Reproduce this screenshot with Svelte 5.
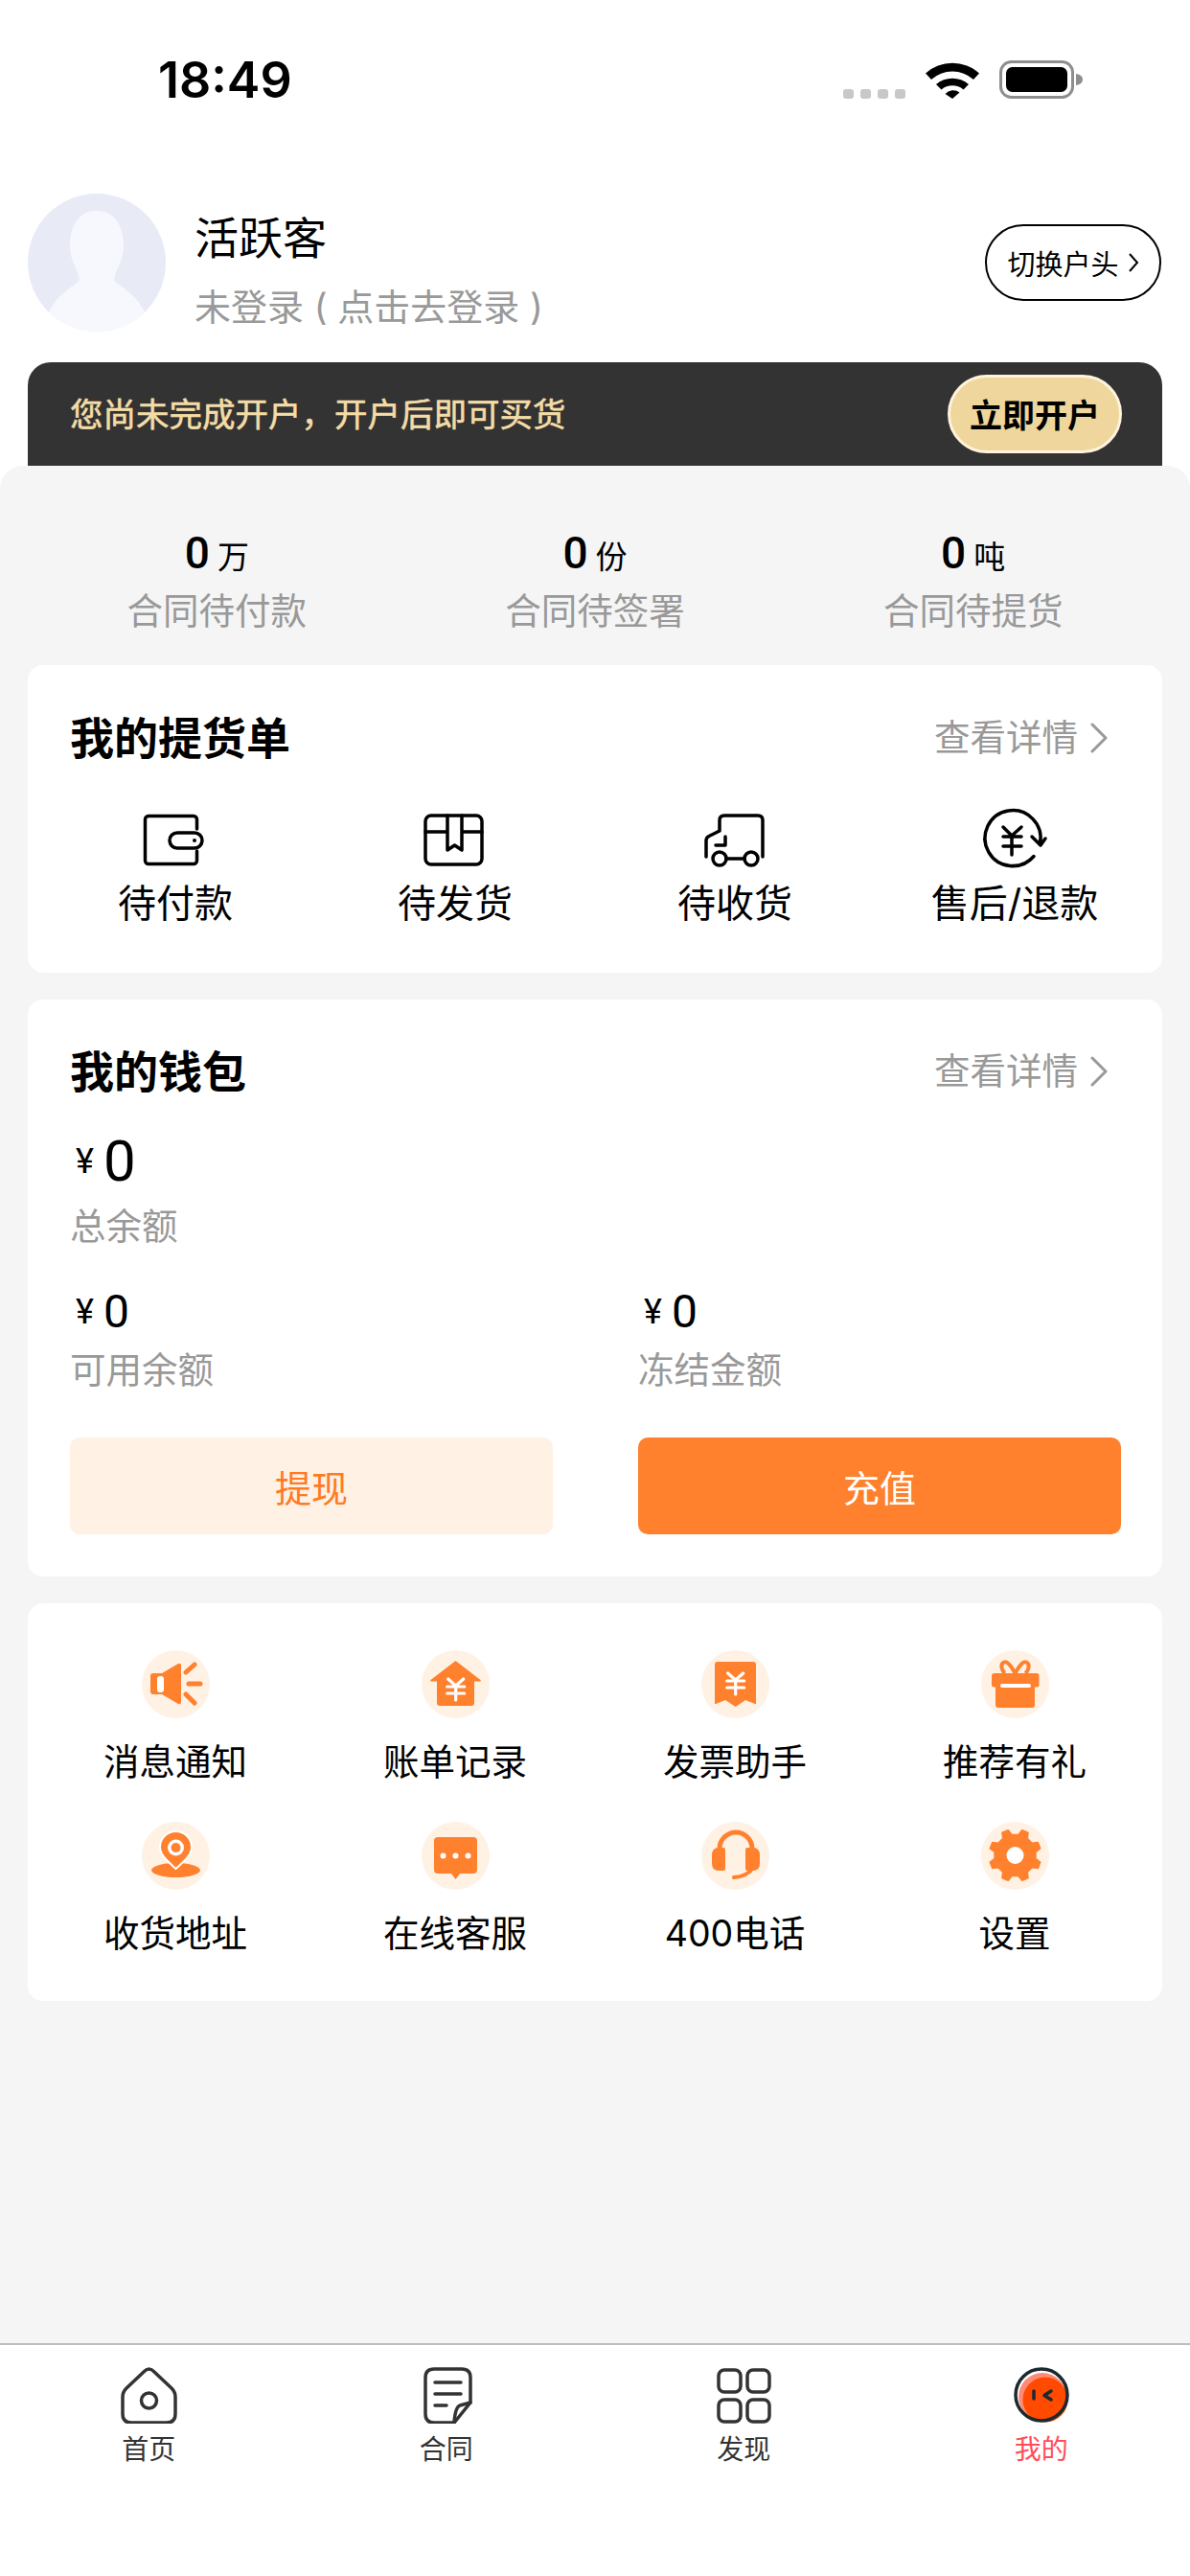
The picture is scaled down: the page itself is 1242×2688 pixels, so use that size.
<script>
	const orange = '#ff812e';

	// 8 teeth gear, teeth sit at 22.5deg so there is a notch straight up
	function gear_path(cx, cy, outer, inner) {
		let points = [];
		for (let i = 0; i < 8; i++) {
			const mid = ((i * 45 + 22.5 - 90) * Math.PI) / 180;
			const spread = [-13, -7, 7, 13];
			const radius = [inner, outer, outer, inner];
			spread.forEach((deg, k) => {
				const a = mid + (deg * Math.PI) / 180;
				points.push(`${(cx + radius[k] * Math.cos(a)).toFixed(1)} ${(cy + radius[k] * Math.sin(a)).toFixed(1)}`);
			});
		}
		return 'M' + points.join('L') + 'Z';
	}

	const stats = [
		{ value: '0', unit: '万', label: '合同待付款' },
		{ value: '0', unit: '份', label: '合同待签署' },
		{ value: '0', unit: '吨', label: '合同待提货' }
	];

	const order_items = [
		{
			label: '待付款',
			icon: `<path d="M59.5 25V15a3.5 3.5 0 0 0-3.5-3.5H9A3.5 3.5 0 0 0 5.500 15v43A3.500 3.500 0 0 0 9 61.500h47a3.500 3.500 0 0 0 3.500-3.500V48"/><rect x="31" y="29" width="34" height="16" rx="8"/><circle cx="57" cy="37" r="2" fill="#000" stroke="none"/>`
		},
		{
			label: '待发货',
			icon: `<rect x="6" y="11" width="59" height="51" rx="6"/><path d="M6 28H29M44 28H65M29 11V47L36.500 42L44 47V11"/>`
		},
		{
			label: '待收货',
			icon: `<path d="M7 54V37q0-3 3-4.500L21 27V16q0-5 5-5H61q5 0 5 5V54"/><path d="M27 33V42H17"/><circle cx="21" cy="56" r="7"/><circle cx="54" cy="56" r="7"/><path d="M28 56H47"/>`
		},
		{
			label: '售后/退款',
			icon: `<path d="M57 53.500A29 29 0 1 1 63.500 40"/><path d="M55 33L64 42L69 35"/><path d="M25 23L34 32L44 23M25 33H44M25 43H44M34 32V52"/>`
		}
	];

	const yen = (x, y) =>
		`<path d="M${x - 8} ${y - 7}L${x} ${y}L${x + 8} ${y - 7}M${x - 9} ${y + 1}H${x + 9}M${x - 9} ${y + 8}H${x + 9}M${x} ${y}V${y + 15}" fill="none" stroke="#fff" stroke-width="3.200" stroke-linecap="round" stroke-linejoin="round"/>`;

	const service_items = [
		{
			label: '消息通知',
			icon: `<path d="M12 24H21L38 14q3-1 3 2V54q0 3-3 2L21 46H12q-3 0-3-3V27q0-3 3-3Z" fill="${orange}"/><rect x="16" y="27" width="7" height="17" rx="3" fill="#fff"/><path d="M46 23L55 15M49 35H61M46 46L55 55" stroke="${orange}" stroke-width="5" stroke-linecap="round"/>`
		},
		{
			label: '账单记录',
			icon: `<path d="M35.500 11L61.500 31q1 1.500-1 1.500H55V55q0 3-3 3H19q-3 0-3-3V32.500H10.500q-2 0-1-1.500Z" fill="${orange}"/>${yen(35.7, 37)}`
		},
		{
			label: '发票助手',
			icon: `<path d="M17 12H54q3 0 3 3V56L56 56L46 52L35.700 59L25 52L15 56L14 56V15q0-3 3-3Z" fill="${orange}"/>${yen(35.7, 31)}`
		},
		{
			label: '推荐有礼',
			icon: `<path d="M35.500 24C30 14 26 10 22.500 13.500C20 16 22 22 25 24M35.500 24C41 14 45 10 48.500 13.500C51 16 49 22 46 24" fill="none" stroke="${orange}" stroke-width="4"/><path d="M14 24H58q2.500 0 2.500 2.500V36q0 2.500-2.500 2.500H56V57q0 3-3 3H18q-3 0-3-3V38.500H13.500Q11 38.500 11 36V26.500Q11 24 14 24Z" fill="${orange}"/><rect x="20" y="35" width="32" height="4" rx="2" fill="#fff"/>`
		},
		{
			label: '收货地址',
			icon: `<ellipse cx="35.500" cy="50.500" rx="25.500" ry="7.500" fill="${orange}"/><path d="M35.500 49C28 42 19 35 19 26.500A16.500 16.500 0 0 1 52 26.500C52 35 43 42 35.500 49Z" fill="${orange}" stroke="#fff" stroke-width="2"/><circle cx="35.500" cy="27" r="8.500" fill="#fff"/><circle cx="35.500" cy="27" r="5" fill="${orange}"/>`
		},
		{
			label: '在线客服',
			icon: `<path d="M17 16H54q4 0 4 4V50q0 4-4 4H40L35.500 60L31 54H17q-4 0-4-4V20q0-4 4-4Z" fill="${orange}"/><circle cx="22.500" cy="35.500" r="3" fill="#fff"/><circle cx="35.500" cy="35.500" r="3" fill="#fff"/><circle cx="48.500" cy="35.500" r="3" fill="#fff"/>`
		},
		{
			label: '400电话',
			icon: `<path d="M19 28A17 17 0 0 1 53 28" fill="none" stroke="${orange}" stroke-width="5" stroke-linecap="round"/><path d="M23 27q2 0 2 2V49q0 2-2 2H18Q11 51 11 43V35Q11 27 18 27Z" fill="${orange}"/><path d="M48 27q-2 0-2 2V49q0 2 2 2H54Q61 51 61 43V35Q61 27 54 27Z" fill="${orange}"/><path d="M54 48Q48 57 34 58" fill="none" stroke="${orange}" stroke-width="4" stroke-linecap="round"/>`
		},
		{
			label: '设置',
			icon: `<path d="${gear_path(35.5, 35, 27, 21.5)}" fill="${orange}" stroke="${orange}" stroke-width="2" stroke-linejoin="round"/><circle cx="35.500" cy="35" r="9" fill="#fff"/>`
		}
	];
</script>

<div class="page">
	<header class="top">
		<div class="status">
			<span class="time">18:49</span>
			<div class="status-icons">
				<div class="dots"><i></i><i></i><i></i><i></i></div>
				<svg class="wifi" width="56" height="40" viewBox="0 0 56 40">
					<path d="M0 13.500A42 42 0 0 1 56 13.500L50 20A33 33 0 0 0 6 20Z" />
					<path d="M11 25A26 26 0 0 1 45 25L39.500 30.500A18 18 0 0 0 16.500 30.500Z" />
					<path d="M20.500 35A11 11 0 0 1 35.500 33.500L28 40Z" />
				</svg>
				<svg class="battery" width="90" height="40" viewBox="0 0 90 40">
					<rect x="1.500" y="1.500" width="75" height="37" rx="11" fill="none" stroke="#8e8e8e" stroke-width="3" />
					<rect x="7" y="7" width="64" height="26" rx="6.500" fill="#000" />
					<path d="M80 14q7 1 7 6t-7 6Z" fill="#8e8e8e" />
				</svg>
			</div>
		</div>

		<div class="profile">
			<svg class="avatar" width="144" height="144" viewBox="0 0 144 144">
				<defs>
					<clipPath id="avatar-clip"><circle cx="72" cy="72" r="72" /></clipPath>
				</defs>
				<circle cx="72" cy="72" r="72" fill="#e8ebf6" />
				<g clip-path="url(#avatar-clip)" fill="#f7f8fd">
					<path d="M72 18C52 18 44 36 44 54C44 70 52 78 54 90C48 100 20 104 16 150H128C124 104 96 100 90 90C92 78 100 70 100 54C100 36 92 18 72 18Z" />
				</g>
			</svg>
			<div class="who">
				<div class="name">活跃客</div>
				<div class="login">未登录 ( 点击去登录 )</div>
			</div>
			<div class="switch">
				切换户头
				<svg width="12" height="22" viewBox="0 0 12 22"><path d="M2 2L10 11L2 20" /></svg>
			</div>
		</div>

		<div class="banner">
			<span>您尚未完成开户，开户后即可买货</span>
			<div class="open">立即开户</div>
		</div>
	</header>

	<main class="sheet">
		<div class="stats">
			{#each stats as s}
				<div class="stat">
					<div class="stat-value">{s.value}<small>{s.unit}</small></div>
					<div class="stat-label">{s.label}</div>
				</div>
			{/each}
		</div>

		<section class="card orders">
			<div class="card-head">
				<h2>我的提货单</h2>
				<div class="more">
					查看详情
					<svg width="20" height="32" viewBox="0 0 20 32"><path d="M3 2L17 16L3 30" /></svg>
				</div>
			</div>
			<div class="order-row">
				{#each order_items as item}
					<div class="order-item">
						<svg width="74" height="70" viewBox="0 0 74 70">{@html item.icon}</svg>
						<span>{item.label}</span>
					</div>
				{/each}
			</div>
		</section>

		<section class="card wallet">
			<div class="card-head">
				<h2>我的钱包</h2>
				<div class="more">
					查看详情
					<svg width="20" height="32" viewBox="0 0 20 32"><path d="M3 2L17 16L3 30" /></svg>
				</div>
			</div>
			<div class="money big"><small>¥</small>0</div>
			<div class="money-label">总余额</div>
			<div class="money-row">
				<div>
					<div class="money"><small>¥</small>0</div>
					<div class="money-label">可用余额</div>
				</div>
				<div>
					<div class="money"><small>¥</small>0</div>
					<div class="money-label">冻结金额</div>
				</div>
			</div>
			<div class="actions">
				<div class="btn light">提现</div>
				<div class="btn solid">充值</div>
			</div>
		</section>

		<section class="card services">
			{#each service_items as item}
				<div class="service">
					<svg width="71" height="71" viewBox="0 0 71 71">
						<circle cx="35.500" cy="35.500" r="35.500" fill="#fff1e4" />
						{@html item.icon}
					</svg>
					<span>{item.label}</span>
				</div>
			{/each}
		</section>
	</main>

	<nav class="tabs">
		<div class="tab">
			<svg width="60" height="60" viewBox="0 0 60 60">
				<path d="M25 6Q30.500 0 36 6L54 23Q58 27 58 32V50Q58 59 49 59H12Q3 59 3 50V32Q3 27 7 23Z" />
				<circle cx="30.500" cy="36" r="8" />
			</svg>
			<span>首页</span>
		</div>
		<div class="tab">
			<svg width="60" height="60" viewBox="0 0 60 60">
				<path d="M55 38V12Q55 3 46 3H17Q8 3 8 12V50Q8 59 17 59H38Z" />
				<path d="M55 38L44 41Q39 43 38 59" />
				<path d="M18 17H45M18 29H45M18 41H30" />
			</svg>
			<span>合同</span>
		</div>
		<div class="tab">
			<svg width="60" height="60" viewBox="0 0 60 60">
				<rect x="4" y="4" width="23" height="23" rx="6" />
				<rect x="34" y="4" width="23" height="23" rx="6" />
				<rect x="4" y="35" width="23" height="23" rx="6" />
				<rect x="34" y="35" width="23" height="23" rx="6" />
			</svg>
			<span>发现</span>
		</div>
		<div class="tab active">
			<svg width="60" height="60" viewBox="0 0 60 60">
				<circle cx="31" cy="32" r="25" fill="#ff8a75" stroke="none" />
				<circle cx="34" cy="35" r="23.500" fill="#ff4a00" stroke="none" />
				<circle cx="30" cy="30" r="27" stroke="#1c2a30" />
				<path d="M22 26V34M40 26L33 30.500L40 35" stroke="#1c2a30" />
			</svg>
			<span>我的</span>
		</div>
	</nav>
</div>

<style>
	:global(body) {
		margin: 0;
		background: #fff;
	}

	.page {
		width: 1242px;
		height: 2688px;
		display: flex;
		flex-direction: column;
		overflow: hidden;
		font-family: Inter, 'Noto Sans CJK SC', sans-serif;
		color: #000;
	}

	.status {
		height: 202px;
		box-sizing: border-box;
		padding: 54px 109px 0 165px;
		display: flex;
		justify-content: space-between;
		align-items: flex-start;
	}

	.time {
		font-size: 52px;
		line-height: 60px;
		font-weight: 600;
	}

	.status-icons {
		display: flex;
		align-items: flex-end;
		margin-top: 9px;
	}

	.dots {
		display: flex;
		gap: 7px;
		margin-right: 21px;
	}

	.dots i {
		width: 11px;
		height: 10px;
		border-radius: 3px;
		background: #c8c8c8;
	}

	.wifi {
		margin-right: 21px;
	}

	.profile {
		display: flex;
		align-items: center;
		padding: 0 30px 0 29px;
	}

	.who {
		flex: 1;
		margin: 15px 0 0 30px;
	}

	.name {
		font-size: 46px;
		line-height: 60px;
	}

	.login {
		font-size: 38px;
		line-height: 50px;
		margin-top: 17px;
		color: #999;
	}

	.switch {
		display: flex;
		align-items: center;
		justify-content: center;
		gap: 9px;
		width: 184px;
		height: 80px;
		box-sizing: border-box;
		border: 2.5px solid #000;
		border-radius: 40px;
		font-size: 29px;
	}

	.switch path {
		fill: none;
		stroke: #000;
		stroke-width: 2;
	}

	.banner {
		height: 109px;
		box-sizing: border-box;
		margin: 32px 29px 0;
		padding: 0 42px 6px 44px;
		display: flex;
		align-items: center;
		justify-content: space-between;
		background: #333;
		border-radius: 24px 24px 0 0;
		font-size: 34.500px;
		color: #f3dca6;
		-webkit-text-stroke: 0.6px #f3dca6;
	}

	.open {
		width: 182px;
		height: 82px;
		box-sizing: border-box;
		margin-top: 4px;
		display: flex;
		align-items: center;
		justify-content: center;
		border: 3px solid #fff3dc;
		border-radius: 41px;
		background: #efd69c;
		color: #000;
		font-size: 34px;
		font-weight: 700;
		-webkit-text-stroke: 0;
	}

	.sheet {
		flex: 1;
		margin-top: -1px;
		padding: 0 29px;
		background: #f5f5f5;
		border-radius: 24px 24px 0 0;
		position: relative;
	}

	.stats {
		display: grid;
		grid-template-columns: repeat(3, 1fr);
		padding-top: 68px;
		text-align: center;
	}

	.stat-value {
		font-family: Roboto, 'Noto Sans CJK SC', sans-serif;
		font-size: 46px;
		line-height: 46px;
		font-weight: 500;
	}

	.stat-value small {
		font-size: 33px;
		line-height: 0;
		font-weight: 400;
		margin-left: 8px;
	}

	.stat-label {
		margin-top: 18px;
		font-size: 37.500px;
		line-height: 40px;
		color: #999;
	}

	.card {
		background: #fff;
		border-radius: 16px;
		margin-top: 28px;
	}

	.orders {
		margin-top: 36px;
		padding: 53px 0 52px;
	}

	.card-head {
		display: flex;
		align-items: center;
		justify-content: space-between;
		padding: 0 56px 0 44px;
	}

	h2 {
		margin: 0;
		font-size: 46px;
		line-height: 46px;
		font-weight: 700;
	}

	.more {
		display: flex;
		align-items: center;
		gap: 12px;
		font-size: 37.500px;
		line-height: 46px;
		color: #999;
	}

	.more path {
		fill: none;
		stroke: #999;
		stroke-width: 3;
		stroke-linecap: round;
		stroke-linejoin: round;
	}

	.order-row {
		display: grid;
		grid-template-columns: repeat(4, 292px);
		padding: 47px 8px 0;
	}

	.order-item {
		display: flex;
		flex-direction: column;
		align-items: center;
		gap: 13px;
		font-size: 40px;
		line-height: 40px;
	}

	.order-item svg {
		fill: none;
		stroke: #000;
		stroke-width: 3.500;
		stroke-linecap: round;
		stroke-linejoin: round;
	}

	.wallet {
		padding: 52px 0 44px;
	}

	.money,
	.money-label,
	.money-row,
	.actions {
		margin-left: 44px;
		margin-right: 43px;
	}

	.money {
		display: flex;
		align-items: center;
		font-family: Roboto, sans-serif;
		font-size: 48px;
		line-height: 48px;
		font-weight: 400;
	}

	.money small {
		font-size: 36px;
		font-weight: 400;
		margin: 0 10px 0 6px;
	}

	.money.big {
		margin-top: 41px;
		font-size: 60px;
		line-height: 60px;
	}

	.money-label {
		margin-top: 18px;
		font-size: 37.500px;
		line-height: 40px;
		color: #999;
	}

	.money-row {
		display: grid;
		grid-template-columns: 593px 1fr;
		margin-top: 45px;
	}

	.money-row .money,
	.money-row .money-label {
		margin-left: 0;
		margin-right: 0;
	}

	.money-row .money-label {
		margin-top: 17px;
	}

	.actions {
		display: grid;
		grid-template-columns: 504px 504px;
		justify-content: space-between;
		margin-top: 50px;
	}

	.btn {
		height: 101px;
		display: flex;
		align-items: center;
		justify-content: center;
		border-radius: 10px;
		font-size: 38px;
	}

	.light {
		background: #fff1e4;
		color: #ff7a22;
	}

	.solid {
		background: #ff812e;
		color: #fff;
	}

	.services {
		display: grid;
		grid-template-columns: repeat(4, 292px);
		row-gap: 42px;
		padding: 49px 8px 50px;
	}

	.service {
		display: flex;
		flex-direction: column;
		align-items: center;
		gap: 26px;
		font-size: 37.500px;
		line-height: 40px;
	}

	.tabs {
		height: 243px;
		box-sizing: border-box;
		padding-top: 22px;
		display: grid;
		grid-template-columns: repeat(4, 1fr);
		align-items: start;
		border-top: 2px solid #bdbdbd;
		background: #fff;
	}

	.tab {
		display: flex;
		flex-direction: column;
		align-items: center;
		gap: 12px;
		font-size: 28px;
		line-height: 30px;
		color: #333;
	}

	.tab svg {
		fill: none;
		stroke: #333;
		stroke-width: 3.500;
		stroke-linecap: round;
		stroke-linejoin: round;
	}

	.active {
		color: #ff4d5a;
	}
</style>
